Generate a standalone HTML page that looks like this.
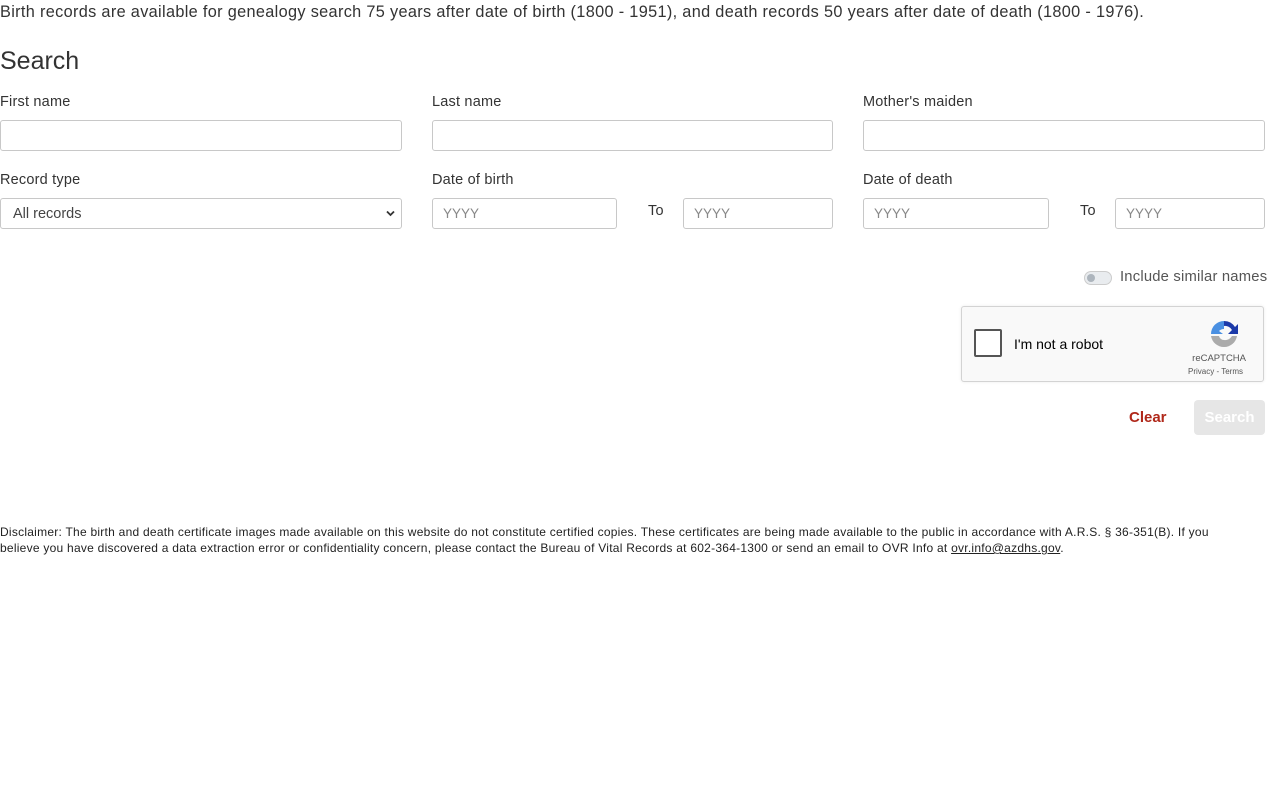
<!DOCTYPE html>
<html><head><meta charset="utf-8"><style>
body{margin:0;background:#fff;font-family:"Liberation Sans",sans-serif;color:#212529;width:1280px;height:800px;position:relative;overflow:hidden}
.a{position:absolute;white-space:nowrap}
.lbl{font-size:14.5px;color:#333;letter-spacing:0.2px}
.in{position:absolute;box-sizing:border-box;border:1px solid #c8c8c8;border-radius:3px;height:31px;background:#fff;font-size:13.5px;color:#888;padding:7px 10px}
</style></head><body>
<div class="a" style="left:0;top:3px;font-size:16.3px;color:#333;letter-spacing:0.33px">Birth records are available for genealogy search 75 years after date of birth (1800 - 1951), and death records 50 years after date of death (1800 - 1976).</div>
<div class="a" style="left:0;top:47px;font-size:25px;color:#333">Search</div>
<div class="a lbl" style="left:0;top:94px">First name</div>
<div class="a lbl" style="left:432px;top:94px">Last name</div>
<div class="a lbl" style="left:863px;top:94px">Mother's maiden</div>
<div class="in" style="left:0;top:120px;width:402px"></div>
<div class="in" style="left:432px;top:120px;width:401px"></div>
<div class="in" style="left:863px;top:120px;width:402px"></div>
<div class="a lbl" style="left:0;top:172px">Record type</div>
<div class="a lbl" style="left:432px;top:172px">Date of birth</div>
<div class="a lbl" style="left:863px;top:172px">Date of death</div>
<div class="in" style="left:0;top:198px;width:402px;color:#444;font-size:14.5px;padding:7px 12px">All records
<svg style="position:absolute;right:6px;top:11px" width="9" height="7" viewBox="0 0 9 7"><path d="M1 1.5L4.5 5 8 1.5" stroke="#333" stroke-width="1.8" fill="none"/></svg></div>
<div class="in" style="left:432px;top:198px;width:185px">YYYY</div>
<div class="a lbl" style="left:648px;top:203px">To</div>
<div class="in" style="left:683px;top:198px;width:150px">YYYY</div>
<div class="a lbl" style="left:1080px;top:203px">To</div>
<div class="in" style="left:863px;top:198px;width:186px">YYYY</div>
<div class="in" style="left:1115px;top:198px;width:150px">YYYY</div>
<div class="a" style="left:1084px;top:271px;width:28px;height:14px;border-radius:8px;background:#e9ecef;border:1px solid #ccc;box-sizing:border-box"><div style="position:absolute;left:2px;top:2px;width:8px;height:8px;border-radius:50%;background:#adb5bd"></div></div>
<div class="a" style="left:1120px;top:269px;font-size:14.8px;color:#555;letter-spacing:0.2px">Include similar names</div>
<div class="a" style="left:961px;top:306px;width:303px;height:76px;box-sizing:border-box;border:1px solid #d3d3d3;border-radius:3px;background:#f9f9f9;box-shadow:0 0 3px rgba(0,0,0,.08)">
<div style="position:absolute;left:12px;top:22px;width:28px;height:28px;box-sizing:border-box;border:2px solid #555;border-radius:2px;background:#fff"></div>
<div style="position:absolute;left:52px;top:29px;font-size:14px;color:#000">I'm not a robot</div>
<svg style="position:absolute;left:246px;top:11px" width="32" height="32" viewBox="0 0 32 32"><path d="M16 3a13 13 0 0 1 11 6l3-3v10H20l4-4a8 8 0 0 0-8-4z" fill="#1c3aa9"/><path d="M3 16A13 13 0 0 1 16 3v8a8 8 0 0 0-5 2l4 3H3z" fill="#4a90e2"/><path d="M16 29A13 13 0 0 1 3 18h8a5 5 0 0 0 5 4 8 8 0 0 0 8-4h5a13 13 0 0 1-13 11z" fill="#ababab"/></svg>
<div style="position:absolute;right:17px;top:46px;font-size:9.5px;color:#555">reCAPTCHA</div>
<div style="position:absolute;right:20px;top:60px;font-size:8px;color:#555">Privacy - Terms</div>
</div>
<div class="a" style="left:1129px;top:409px;font-size:15px;color:#b0281a;font-weight:bold">Clear</div>
<div class="a" style="left:1194px;top:400px;width:71px;height:35px;background:#e6e6e6;border-radius:4px;color:#fff;font-size:15px;font-weight:bold;text-align:center;line-height:35px">Search</div>
<div class="a" style="left:0;top:524px;font-size:12px;line-height:16px;color:#222;white-space:normal;width:1240px;letter-spacing:0.25px">Disclaimer: The birth and death certificate images made available on this website do not constitute certified copies. These certificates are being made available to the public in accordance with A.R.S. § 36-351(B). If you believe you have discovered a data extraction error or confidentiality concern, please contact the Bureau of Vital Records at 602-364-1300 or send an email to OVR Info at <u>ovr.info@azdhs.gov</u>.</div>
</body></html>
